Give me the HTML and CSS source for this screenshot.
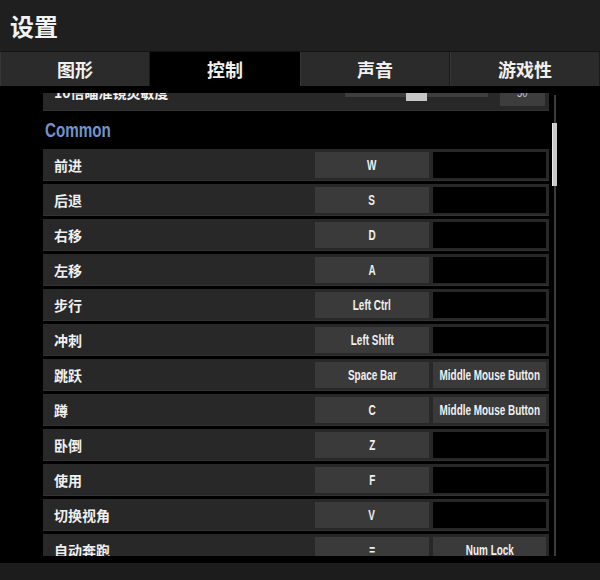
FILE: index.html
```html
<!DOCTYPE html>
<html lang="zh">
<head>
<meta charset="utf-8">
<title>设置</title>
<link rel="stylesheet" href="styles.css">
</head>
<body>
<div class="app">
  <header class="header"><h1 class="title">设置</h1></header>
  <nav class="tabs">
    <div class="tab">图形</div>
    <div class="tab active">控制</div>
    <div class="tab">声音</div>
    <div class="tab">游戏性</div>
  </nav>
  <main class="content">
    <div class="viewport">
      <div class="row partial">
        <div class="label">10倍瞄准镜灵敏度</div>
        <div class="slider"><div class="track"><div class="thumb"></div></div></div>
        <div class="value"><span class="narrow">50</span></div>
      </div>
      <div class="section"><span class="narrow">Common</span></div>
      <div class="row"><div class="label">前进</div><div class="key"><span class="narrow">W</span></div><div class="key empty"></div></div>
      <div class="row"><div class="label">后退</div><div class="key"><span class="narrow">S</span></div><div class="key empty"></div></div>
      <div class="row"><div class="label">右移</div><div class="key"><span class="narrow">D</span></div><div class="key empty"></div></div>
      <div class="row"><div class="label">左移</div><div class="key"><span class="narrow">A</span></div><div class="key empty"></div></div>
      <div class="row"><div class="label">步行</div><div class="key"><span class="narrow">Left Ctrl</span></div><div class="key empty"></div></div>
      <div class="row"><div class="label">冲刺</div><div class="key"><span class="narrow">Left Shift</span></div><div class="key empty"></div></div>
      <div class="row"><div class="label">跳跃</div><div class="key"><span class="narrow">Space Bar</span></div><div class="key"><span class="narrow">Middle Mouse Button</span></div></div>
      <div class="row"><div class="label">蹲</div><div class="key"><span class="narrow">C</span></div><div class="key"><span class="narrow">Middle Mouse Button</span></div></div>
      <div class="row"><div class="label">卧倒</div><div class="key"><span class="narrow">Z</span></div><div class="key empty"></div></div>
      <div class="row"><div class="label">使用</div><div class="key"><span class="narrow">F</span></div><div class="key empty"></div></div>
      <div class="row"><div class="label">切换视角</div><div class="key"><span class="narrow">V</span></div><div class="key empty"></div></div>
      <div class="row"><div class="label">自动奔跑</div><div class="key"><span class="narrow">=</span></div><div class="key"><span class="narrow">Num Lock</span></div></div>
    </div>
    <div class="scrollbar"><div class="scroll-thumb"></div></div>
  </main>
  <footer class="footer"></footer>
</div>
</body>
</html>
```
FILE: styles.css
```css
* { box-sizing: border-box; }
html, body { margin: 0; padding: 0; background: #000; }
body {
  width: 600px;
  height: 580px;
  overflow: hidden;
  font-family: "Noto Sans CJK SC", "Noto Sans", sans-serif;
  color: #fff;
}
.app { display: flex; flex-direction: column; height: 580px; }

.header {
  height: 52px;
  background: #1f1f1f;
  border-bottom: 1px solid #141414;
  display: flex;
  align-items: center;
  padding-left: 10px;
}
.title {
  margin: 0;
  font-size: 24px;
  font-weight: 700;
  line-height: 1;
  color: #f2f2f2;
}

.tabs { display: flex; height: 34px; }
.tab {
  flex: 1;
  display: flex;
  align-items: center;
  justify-content: center;
  background: #2b2b2b;
  border-left: 1px solid #363636;
  border-right: 1px solid #1a1a1a;
  font-size: 18px;
  font-weight: 700;
  color: #f0f0f0;
}
.tab.active { background: #000; border-color: #000; }

.content {
  position: relative;
  height: 477px;
  padding-top: 7px;
  padding-bottom: 7px;
  background: #000;
}
.viewport {
  height: 463px;
  overflow: hidden;
  padding-left: 43px;
}

.narrow {
  display: inline-block;
  white-space: nowrap;
  font-family: "Liberation Sans", Arial, sans-serif;
  font-weight: 700;
  transform: scaleX(0.71);
}

.row {
  width: 506px;
  height: 32px;
  margin-bottom: 3px;
  background: #282828;
  border-bottom: 1px solid #333;
  display: flex;
  align-items: center;
  padding: 0 3px 0 11px;
  gap: 4px;
}
.row.partial { margin-top: -14px; margin-bottom: 0; }
.label {
  flex: 1;
  font-size: 14px;
  font-weight: 700;
  color: #f0f0f0;
}
.row.partial .label {
  align-self: flex-start;
  margin-top: 3px;
  line-height: 20px;
}
.key {
  height: 26px;
  display: flex;
  align-items: center;
  justify-content: center;
  overflow: visible;
  background: #3a3a3a;
  font-size: 14px;
  color: #f0f0f0;
}
.key:nth-child(2) { width: 114px; }
.key:nth-child(3) { width: 113px; }
.key.empty { background: #000; }

.slider { width: 143px; margin-right: 8px; display: flex; align-items: center; }
.track { position: relative; width: 100%; height: 5px; background: #3e3e3e; }
.thumb {
  position: absolute;
  left: 61px;
  top: -4px;
  width: 21px;
  height: 13px;
  background: #c6c6c6;
}
.value {
  align-self: flex-start;
  margin-top: 6px;
  width: 45px;
  height: 21px;
  margin-right: 1px;
  background: #3d3d3d;
  display: flex;
  align-items: flex-start;
  justify-content: center;
  line-height: 16px;
  font-size: 13px;
  color: #cfcfcf;
}
.value .narrow { font-weight: 400; }

.section {
  height: 38px;
  display: flex;
  align-items: center;
  padding-left: 2px;
  font-size: 20px;
  color: #7094c9;
}
.section .narrow { transform: scaleX(0.76); transform-origin: left center; }

.scrollbar {
  position: absolute;
  left: 554px;
  top: 9px;
  width: 2px;
  height: 461px;
  background: #3c3c3c;
}
.scroll-thumb {
  position: absolute;
  left: -2px;
  top: 28px;
  width: 5px;
  height: 63px;
  background: #c9c9c9;
  border-left: 1px solid #e6e6e6;
}

.footer { height: 17px; background: #1c1c1c; }
```
